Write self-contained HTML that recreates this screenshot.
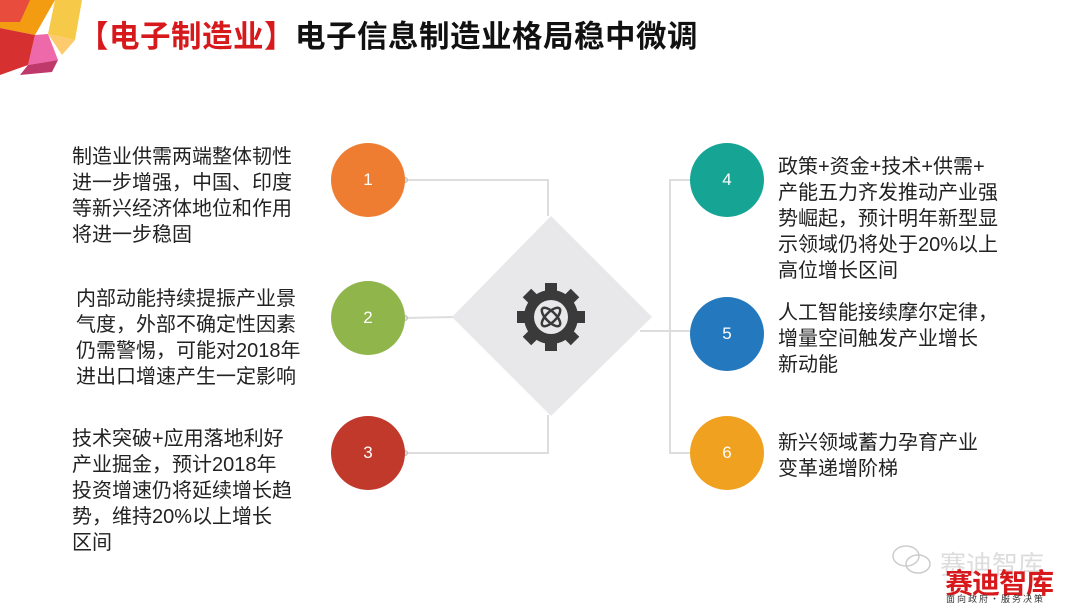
<!DOCTYPE html>
<html><head><meta charset="utf-8"><style>
body{margin:0;width:1080px;height:607px;background:#fff;overflow:hidden;position:relative;font-family:"Liberation Sans","Noto Sans CJK SC",sans-serif}
.t{position:absolute;font-size:20px;line-height:26px;color:#222;white-space:nowrap}
.c{position:absolute;width:74px;height:74px;border-radius:50%;color:#fff;font-size:17px;text-align:center;line-height:74px}
h1{position:absolute;left:78px;top:13px;margin:0;font-size:30.5px;font-weight:bold;color:#111;letter-spacing:0.5px;font-family:"Noto Sans CJK SC",sans-serif;line-height:42px}
h1 span{color:#d7191c}
</style></head><body>
<svg width="1080" height="607" style="position:absolute;left:0;top:0">
<polygon points="0,0 55,0 35,35 0,28" fill="#f39c12"/>
<polygon points="0,0 30,0 20,22 0,22" fill="#e74c3c"/>
<polygon points="55,0 82,0 75,40 48,34" fill="#f7c948"/>
<polygon points="35,35 48,34 58,60 28,65" fill="#e84393" opacity="0.8"/>
<polygon points="0,28 35,35 28,65 0,75" fill="#d63031"/>
<polygon points="28,65 58,60 52,72 20,75" fill="#c0396b"/>
<polygon points="48,34 75,40 62,55" fill="#fdcb6e"/>
<g stroke="#ddd" stroke-width="2" fill="none">
<polyline points="405,180 548,180 548,216"/>
<polyline points="405,453 548,453 548,415"/>
<line x1="405" y1="318" x2="455" y2="317"/>
<polyline points="695,180 670,180 670,453 695,453"/>
<line x1="640" y1="331" x2="695" y2="331"/>
</g>
<polygon points="551,216 652,317 551,416 452,317" fill="#e8e8ea"/>
<g transform="translate(551,317)" fill="#3a3a3a">
<circle r="27"/>
<g><rect x="-6" y="-34" width="12" height="10"/><rect x="-6" y="24" width="12" height="10"/><rect x="-34" y="-6" width="10" height="12"/><rect x="24" y="-6" width="10" height="12"/>
<g transform="rotate(45)"><rect x="-6" y="-34" width="12" height="10"/><rect x="-6" y="24" width="12" height="10"/><rect x="-34" y="-6" width="10" height="12"/><rect x="24" y="-6" width="10" height="12"/></g></g>
<circle r="17" fill="#e8e8ea"/>
<g fill="none" stroke="#3a3a3a" stroke-width="2.5"><ellipse rx="12" ry="5" transform="rotate(45)"/><ellipse rx="12" ry="5" transform="rotate(-45)"/></g>
</g>
<g fill="#ddd" stroke="#bbb"><circle cx="405" cy="180" r="2.5"/><circle cx="405" cy="318" r="2.5"/><circle cx="405" cy="453" r="2.5"/></g>
</svg>
<h1><span>【电子制造业】</span>电子信息制造业格局稳中微调</h1>
<div class="c" style="left:331px;top:143px;background:#ee7d31">1</div>
<div class="c" style="left:331px;top:281px;background:#8fb54b">2</div>
<div class="c" style="left:331px;top:416px;background:#c0392b">3</div>
<div class="c" style="left:690px;top:143px;background:#16a594">4</div>
<div class="c" style="left:690px;top:297px;background:#2478bd">5</div>
<div class="c" style="left:690px;top:416px;background:#f0a11f">6</div>
<div class="t" style="left:72px;top:144px">制造业供需两端整体韧性<br>进一步增强，中国、印度<br>等新兴经济体地位和作用<br>将进一步稳固</div>
<div class="t" style="left:76px;top:286px">内部动能持续提振产业景<br>气度，外部不确定性因素<br>仍需警惕，可能对2018年<br>进出口增速产生一定影响</div>
<div class="t" style="left:72px;top:426px">技术突破+应用落地利好<br>产业掘金，预计2018年<br>投资增速仍将延续增长趋<br>势，维持20%以上增长<br>区间</div>
<div class="t" style="left:778px;top:154px">政策+资金+技术+供需+<br>产能五力齐发推动产业强<br>势崛起，预计明年新型显<br>示领域仍将处于20%以上<br>高位增长区间</div>
<div class="t" style="left:778px;top:300px">人工智能接续摩尔定律，<br>增量空间触发产业增长<br>新动能</div>
<div class="t" style="left:778px;top:430px">新兴领域蓄力孕育产业<br>变革递增阶梯</div>
<div style="position:absolute;left:940px;top:545px;font-size:26px;color:#ddd;font-family:'Noto Sans CJK SC',sans-serif">赛迪智库</div>
<div style="position:absolute;left:945px;top:562px;font-size:28px;font-weight:bold;color:#d7191c;font-family:'Noto Sans CJK SC',sans-serif;letter-spacing:-1px">赛迪智库</div>
<div style="position:absolute;left:946px;top:592px;font-size:9px;color:#333;letter-spacing:2px;font-family:'Noto Sans CJK SC',sans-serif">面向政府·服务决策</div>
<svg style="position:absolute;left:890px;top:542px" width="46" height="36"><g fill="none" stroke="#ccc" stroke-width="1.5"><ellipse cx="16" cy="14" rx="13" ry="10"/><ellipse cx="28" cy="22" rx="12" ry="9"/></g></svg>
</body></html>
